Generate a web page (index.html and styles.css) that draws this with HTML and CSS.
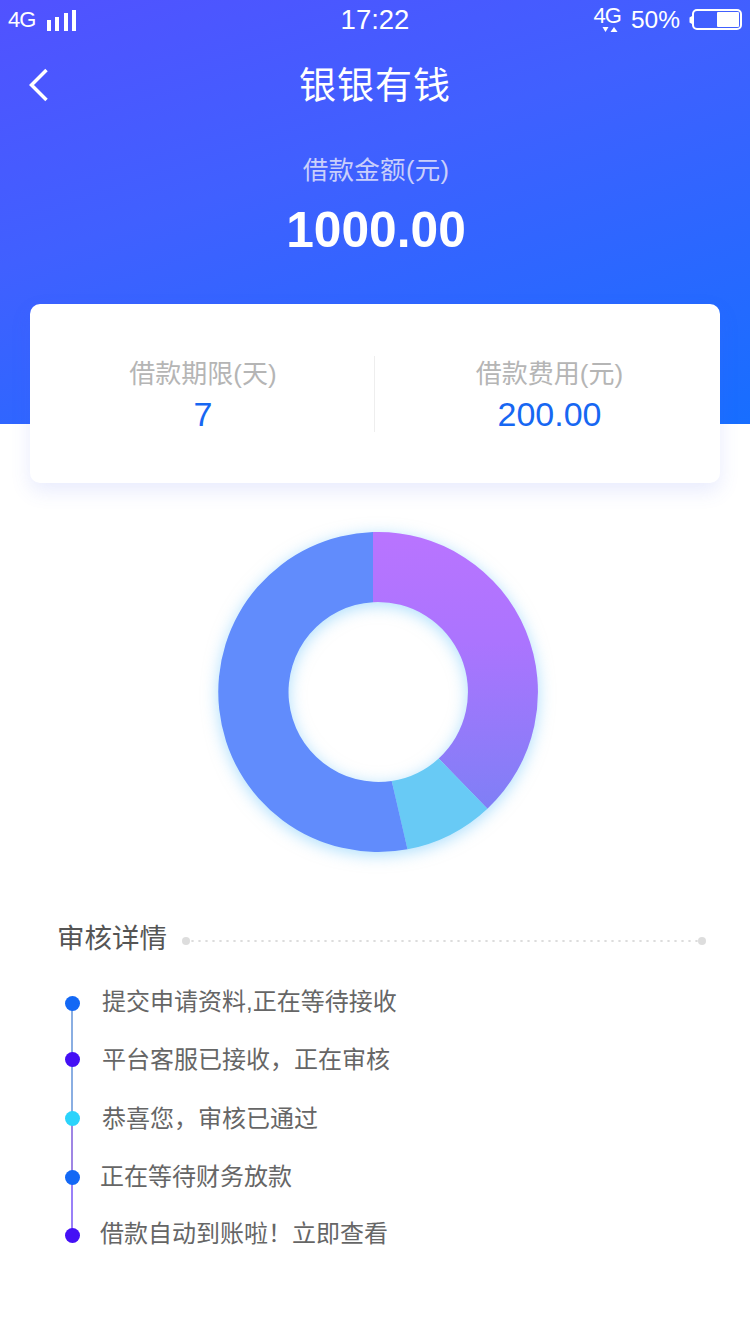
FILE: index.html
```html
<!DOCTYPE html>
<html>
<head>
  <meta charset="UTF-8" />
  <title>银银有钱</title>
  <link rel="stylesheet" href="styles.css">
</head>
<body>
  <div class="page">
    <div class="hero">
      <div class="status-bar">
        <div class="status-left">
          <span class="net">4G</span>
          <svg class="signal" width="30" height="22" viewBox="0 0 30 22">
            <rect x="0" y="10" width="4" height="11" fill="#fff" />
            <rect x="8" y="7" width="4" height="14" fill="#fff" />
            <rect x="17" y="3" width="4" height="18" fill="#fff" />
            <rect x="25" y="0" width="4" height="21" fill="#fff" />
          </svg>
        </div>
        <div class="status-time">17:22</div>
        <div class="status-right">
          <div class="net-arrows">
            <span class="net">4G</span>
            <svg class="arrows" width="16" height="5" viewBox="0 0 16 5">
              <path d="M0.500 0h6L3.500 5z" fill="#fff" />
              <path d="M12 0l3.500 5h-7z" fill="#fff" />
            </svg>
          </div>
          <span class="battery-text">50%</span>
          <svg class="battery" width="54" height="22" viewBox="0 0 54 22">
            <path d="M3 7v8L0.500 13.500v-5z" fill="#fff" />
            <rect x="4" y="1" width="48" height="19" rx="4" fill="none" stroke="#fff" stroke-width="2" />
            <rect x="28" y="3" width="22" height="15" rx="1" fill="#fff" />
          </svg>
        </div>
      </div>
      <div class="nav">
        <svg class="back" width="20" height="34" viewBox="0 0 20 34">
          <path d="M17.500 2L2.500 17l15 15" fill="none" stroke="#fff" stroke-width="3.500" />
        </svg>
        <h1 class="nav-title">银银有钱</h1>
      </div>
      <div class="amount-label">借款金额(元)</div>
      <div class="amount">1000.00</div>
    </div>

    <div class="card">
      <div class="card-col card-col-left">
        <div class="card-label">借款期限(天)</div>
        <div class="card-value">7</div>
      </div>
      <div class="card-col card-col-right">
        <div class="card-label">借款费用(元)</div>
        <div class="card-value">200.00</div>
      </div>
    </div>

    <div class="chart-box">
      <svg class="donut" width="360" height="360" viewBox="0 0 360 360">
        <defs>
          <linearGradient id="slice-purple" x1="0" y1="0" x2="0" y2="1">
            <stop offset="0" stop-color="#b974ff" />
            <stop offset="0.4" stop-color="#ab74fe" />
            <stop offset="1" stop-color="#7f7ff6" />
          </linearGradient>
        </defs>
        <path d="M175 20.080A160 160 0 0 1 289.400 296.700L240.700 246.400A90 90 0 0 0 175 90.140z" fill="url(#slice-purple)" />
        <path d="M289.400 296.700A160 160 0 0 1 209.500 337.300L193.700 269A90 90 0 0 0 240.700 246.400z" fill="#68caf5" />
        <path d="M209.500 337.300A160 160 0 1 1 175 20.080V90.140A90 90 0 1 0 193.700 269z" fill="#618cfc" />
      </svg>
    </div>

    <div class="detail">
      <div class="detail-head">
        <span class="detail-title">审核详情</span>
        <div class="detail-rule"></div>
      </div>
      <ul class="steps">
        <li class="step step-a"><span class="dot dot-blue"></span><span class="step-text">提交申请资料,正在等待接收</span></li>
        <li class="step step-b"><span class="dot dot-violet"></span><span class="step-text">平台客服已接收，正在审核</span></li>
        <li class="step step-c"><span class="dot dot-cyan"></span><span class="step-text">恭喜您，审核已通过</span></li>
        <li class="step step-d"><span class="dot dot-blue"></span><span class="step-text step-text-tight">正在等待财务放款</span></li>
        <li class="step step-e"><span class="dot dot-violet"></span><span class="step-text step-text-tight">借款自动到账啦！立即查看</span></li>
      </ul>
    </div>
  </div>
</body>
</html>
```

FILE: styles.css
```css
* {
  box-sizing: border-box;
}

html, body {
  margin: 0;
  padding: 0;
}

body {
  background: #fff;
  font-family: "Liberation Sans", "Noto Sans CJK SC", sans-serif;
}

.page {
  width: 750px;
  height: 1334px;
  overflow: hidden;
}

.hero {
  height: 424px;
  background: linear-gradient(162deg, #5152ff 0%, #4060ff 40%, #176eff 100%);
  color: #fff;
}

.status-bar {
  height: 40px;
  display: flex;
  align-items: center;
  padding: 0 8px;
}

.status-left {
  flex: 1;
  display: flex;
  align-items: center;
}

.net {
  font-size: 22px;
  letter-spacing: -1px;
  line-height: 22px;
}

.signal {
  margin-left: 12px;
  margin-top: 1px;
}

.status-time {
  font-size: 27.500px;
}

.status-right {
  flex: 1;
  align-self: stretch;
  display: flex;
  justify-content: flex-end;
  align-items: center;
}

.net-arrows {
  align-self: flex-start;
  display: flex;
  flex-direction: column;
  align-items: center;
  margin-top: 5px;
}

.arrows {
  display: block;
  margin: 0 0 0 5px;
}

.battery-text {
  font-size: 24.500px;
  margin-left: 10px;
}

.battery {
  margin-left: 9px;
  margin-right: -1px;
}

.nav {
  height: 90px;
  display: flex;
  justify-content: center;
  align-items: center;
  position: relative;
}

.back {
  position: absolute;
  left: 29px;
  top: 28px;
}

.nav-title {
  margin: -4px 0 0;
  font-size: 37px;
  font-weight: 400;
  letter-spacing: 1px;
  font-family: "Noto Sans CJK SC", sans-serif;
}

.amount-label {
  margin-top: 20px;
  padding-left: 2px;
  text-align: center;
  font-size: 25.500px;
  letter-spacing: 0.3px;
  line-height: 40px;
  color: #c9cffb;
}

.amount {
  margin-top: 10px;
  padding-left: 2px;
  text-align: center;
  font-size: 49.700px;
  font-weight: bold;
  line-height: 60px;
}

.card {
  width: 690px;
  height: 179px;
  margin: -120px 0 0 30px;
  position: relative;
  display: flex;
  align-items: center;
  background: #fff;
  border-radius: 10px;
  box-shadow: 0 8px 20px rgba(80, 100, 240, 0.13);
}

.card-col {
  flex: none;
  height: 76px;
  text-align: center;
}

.card-col-left {
  width: 344px;
  padding-left: 2px;
}

.card-col-right {
  width: 346px;
  border-left: 1px solid #eeeeee;
  padding-left: 4px;
}

.card-label {
  font-size: 26px;
  line-height: 36px;
  color: #b5b5b5;
}

.card-value {
  margin-top: 2px;
  font-size: 34px;
  line-height: 40px;
  color: #1767f2;
}

.chart-box {
  margin-top: 29px;
  display: flex;
  justify-content: center;
  padding-left: 6px;
  height: 360px;
}

.donut {
  display: block;
  filter: drop-shadow(0 3px 8px rgba(90, 190, 250, 0.5));
}

.detail {
  margin-top: 44px;
  padding: 0 44px 0 57px;
}

.detail-head {
  display: flex;
  align-items: center;
  height: 40px;
}

.detail-title {
  font-size: 27.500px;
  color: #555;
}

.detail-rule {
  flex: 1;
  margin: 6px 0 0 15px;
  height: 2px;
  background-image: radial-gradient(circle, #dcdcdc 1px, transparent 1.300px);
  background-size: 7px 2px;
  position: relative;
  top: 2px;
}

.detail-rule::before,
.detail-rule::after {
  content: "";
  position: absolute;
  top: -3px;
  width: 8px;
  height: 8px;
  border-radius: 50%;
  background: #dddddd;
}

.detail-rule::before {
  left: 0;
}

.detail-rule::after {
  right: 0;
}

.steps {
  list-style: none;
  margin: 29px 0 0 8px;
  padding: 0;
}

.step {
  display: flex;
  align-items: center;
  height: 36px;
  position: relative;
}

.step-a { margin-bottom: 20px; }
.step-b { margin-bottom: 23px; }
.step-c { margin-bottom: 23px; }
.step-d { margin-bottom: 22px; }

/* line down to the next dot */
.step::before {
  content: "";
  position: absolute;
  left: 6px;
  top: 18px;
  width: 2px;
}

.step-a::before { height: 56px; background: #8aaee2; }
.step-b::before { height: 59px; background: #8aaee2; }
.step-c::before { height: 59px; background: #9f86e4; }
.step-d::before { height: 58px; background: #9a80f8; }
.step-e::before { display: none; }

.dot {
  width: 15px;
  height: 15px;
  border-radius: 50%;
  position: relative;
  flex: none;
}

.dot-blue { background: #1368f5; }
.dot-violet { background: #4410f5; }
.dot-cyan { background: #2bd3fb; }

.step-text {
  margin: -7px 0 0 22px;
  font-size: 24px;
  color: #666;
  white-space: nowrap;
}

.step-b .step-text,
.step-c .step-text {
  margin-top: -3px;
}

.step-d .step-text {
  margin-top: -5px;
}

.step-text-tight {
  margin-left: 20px;
}
```
